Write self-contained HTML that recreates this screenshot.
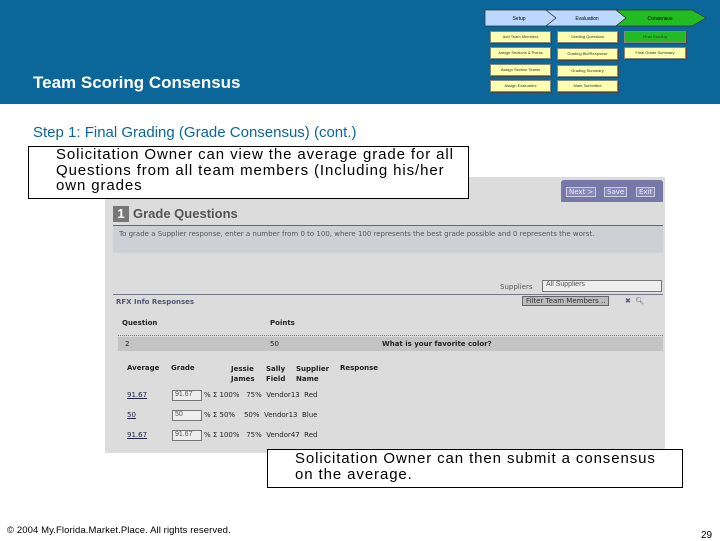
<!DOCTYPE html>
<html><head><style>
*{margin:0;padding:0;box-sizing:border-box}
body{width:720px;height:540px;position:relative;background:#fff;font-family:"Liberation Sans",sans-serif;overflow:hidden}
.a{position:absolute}
.hdr{left:0;top:0;width:720px;height:104px;background:#0b6699}
.st{font-size:4px;text-align:center;color:#333;background:#ffffb0;border:1px solid #887;box-shadow:1px 1px 0 #444;line-height:10px;height:12px}
.sc{left:105px;top:177px;width:560px;height:276px;background:#dcdcdc}
.t{font-family:"DejaVu Sans",sans-serif;font-size:8px;color:#222}
.lk{color:#224;text-decoration:underline}
.in{background:#eee;border:1px solid #777;font-size:7px;color:#555;height:11px;width:30px;padding-left:2px}
.co{font-size:15px;line-height:15.5px;color:#000;white-space:nowrap;letter-spacing:0.9px}
</style></head><body>
<div class="a hdr"></div>
<svg class="a" style="left:484px;top:9px" width="240" height="20">
<polygon points="1,1 62,1 72,9 62,17 1,17" fill="#bcd8ff" stroke="#333" stroke-width=".7"/>
<polygon points="62,1 132,1 142,9 132,17 62,17 72,9" fill="#bcd8ff" stroke="#333" stroke-width=".7"/>
<polygon points="132,1 208,1 222,9 208,17 132,17 142,9" fill="#22bb22" stroke="#333" stroke-width=".7"/>
<text x="35" y="11" font-size="5" text-anchor="middle" font-family="Liberation Sans">Setup</text>
<text x="103" y="11" font-size="5" text-anchor="middle" font-family="Liberation Sans">Evaluation</text>
<text x="176" y="11" font-size="5" text-anchor="middle" font-family="Liberation Sans">Consensus</text>
</svg>
<div class="a st" style="left:490px;top:31px;width:61px">Add Team Members</div>
<div class="a st" style="left:490px;top:47px;width:61px">Assign Sections &amp; Points</div>
<div class="a st" style="left:490px;top:64px;width:61px">Assign Section Teams</div>
<div class="a st" style="left:490px;top:80px;width:61px">Assign Evaluators</div>
<div class="a st" style="left:557px;top:31px;width:61px">Grading Questions</div>
<div class="a st" style="left:557px;top:48px;width:61px">Grading Bid/Response</div>
<div class="a st" style="left:557px;top:65px;width:61px">Grading Summary</div>
<div class="a st" style="left:557px;top:80px;width:61px">Mark Submitted</div>
<div class="a st" style="left:624px;top:31px;width:62px;background:#22bb22">Final Grading</div>
<div class="a st" style="left:624px;top:47px;width:62px">Final Grade Summary</div>
<div class="a" style="left:33px;top:73px;font-size:17px;font-weight:bold;color:#fff">Team Scoring Consensus</div>
<div class="a" style="left:33px;top:124px;font-size:15px;color:#0b6699">Step 1: Final Grading (Grade Consensus) (cont.)</div>

<div class="a sc"></div>
<div class="a" style="left:561px;top:180px;width:102px;height:22px;background:#7777a8;border-radius:3px 3px 0 0"></div>
<div class="a t" style="left:566px;top:187px;background:#8888b8;color:#eef;border:1px solid #ccd;padding:0 2px;font-size:7px">Next &gt;</div>
<div class="a t" style="left:604px;top:187px;background:#8888b8;color:#eef;border:1px solid #ccd;padding:0 2px;font-size:7px">Save</div>
<div class="a t" style="left:636px;top:187px;background:#8888b8;color:#eef;border:1px solid #ccd;padding:0 2px;font-size:7px">Exit</div>
<div class="a" style="left:113px;top:206px;width:16px;height:16px;background:#777;color:#fff;font-size:13px;font-weight:bold;text-align:center;line-height:16px">1</div>
<div class="a" style="left:133px;top:206px;font-size:13px;font-weight:bold;color:#555">Grade Questions</div>
<div class="a" style="left:113px;top:225px;width:550px;height:28px;background:#cfcfd6;border-top:1px solid #667"></div>
<div class="a t" style="left:119px;top:229px;width:500px;font-size:7px;color:#555;line-height:10px">To grade a Supplier response, enter a number from 0 to 100, where 100 represents the best grade possible and 0 represents the worst.</div>
<div class="a t" style="left:500px;top:283px;font-size:7px;color:#555">Suppliers</div>
<div class="a" style="left:542px;top:280px;width:120px;height:12px;background:#eee;border:1px solid #777;font-size:7px;color:#555;padding-left:3px">All Suppliers</div>
<div class="a" style="left:113px;top:294px;width:550px;height:1px;background:#778"></div>
<div class="a t" style="left:116px;top:298px;font-size:7px;font-weight:bold;color:#557">RFX Info Responses</div>
<div class="a t" style="left:522px;top:296px;background:#bbb;border:1px solid #666;font-size:7px;padding:0 3px;color:#333">Filter Team Members ..</div>
<div class="a t" style="left:625px;top:297px;font-size:7px;color:#557">✖ &nbsp;🔍︎</div>
<div class="a t" style="left:122px;top:319px;font-weight:bold;font-size:7px">Question</div>
<div class="a t" style="left:270px;top:319px;font-weight:bold;font-size:7px">Points</div>
<div class="a" style="left:118px;top:335px;width:545px;border-top:1px dotted #777"></div>
<div class="a" style="left:118px;top:337px;width:545px;height:14px;background:#c4c4c4"></div>
<div class="a t" style="left:125px;top:340px;font-size:7px">2</div>
<div class="a t" style="left:270px;top:340px;font-size:7px">50</div>
<div class="a t" style="left:382px;top:340px;font-size:7px;font-weight:bold">What is your favorite color?</div>
<div class="a t" style="left:127px;top:364px;font-size:7px;font-weight:bold">Average</div>
<div class="a t" style="left:171px;top:364px;font-size:7px;font-weight:bold">Grade</div>
<div class="a t" style="left:231px;top:364px;font-size:7px;font-weight:bold;line-height:10px">Jessie<br>James</div>
<div class="a t" style="left:266px;top:364px;font-size:7px;font-weight:bold;line-height:10px">Sally<br>Field</div>
<div class="a t" style="left:296px;top:364px;font-size:7px;font-weight:bold;line-height:10px">Supplier<br>Name</div>
<div class="a t" style="left:340px;top:364px;font-size:7px;font-weight:bold">Response</div>

<div class="a t lk" style="left:127px;top:391px;font-size:7px">91.67</div>
<div class="a in" style="left:172px;top:390px">91.67</div><div class="a t" style="left:204px;top:391px;font-size:7px">% Σ 100% &nbsp;&nbsp;75% &nbsp;Vendor13 &nbsp;Red</div>
<div class="a t lk" style="left:127px;top:411px;font-size:7px">50</div>
<div class="a in" style="left:172px;top:410px">50</div><div class="a t" style="left:204px;top:411px;font-size:7px">% Σ 50% &nbsp;&nbsp;&nbsp;50% &nbsp;Vendor13 &nbsp;Blue</div>
<div class="a t lk" style="left:127px;top:431px;font-size:7px">91.67</div>
<div class="a in" style="left:172px;top:430px">91.67</div><div class="a t" style="left:204px;top:431px;font-size:7px">% Σ 100% &nbsp;&nbsp;75% &nbsp;Vendor47 &nbsp;Red</div>

<div class="a" style="left:28px;top:146px;width:441px;height:53px;background:#fff;border:1px solid #000"></div>
<div class="a co" style="left:56px;top:147px">Solicitation Owner can view the average grade for all<br>Questions from all team members (Including his/her<br>own grades</div>
<div class="a" style="left:267px;top:449px;width:416px;height:39px;background:#fff;border:1px solid #000"></div>
<div class="a co" style="left:295px;top:451px">Solicitation Owner can then submit a consensus<br>on the average.</div>
<div class="a" style="left:7px;top:525px;font-size:9.5px;letter-spacing:0.1px">© 2004 My.Florida.Market.Place. All rights reserved.</div>
<div class="a" style="left:701px;top:530px;font-size:10px">29</div>
</body></html>
